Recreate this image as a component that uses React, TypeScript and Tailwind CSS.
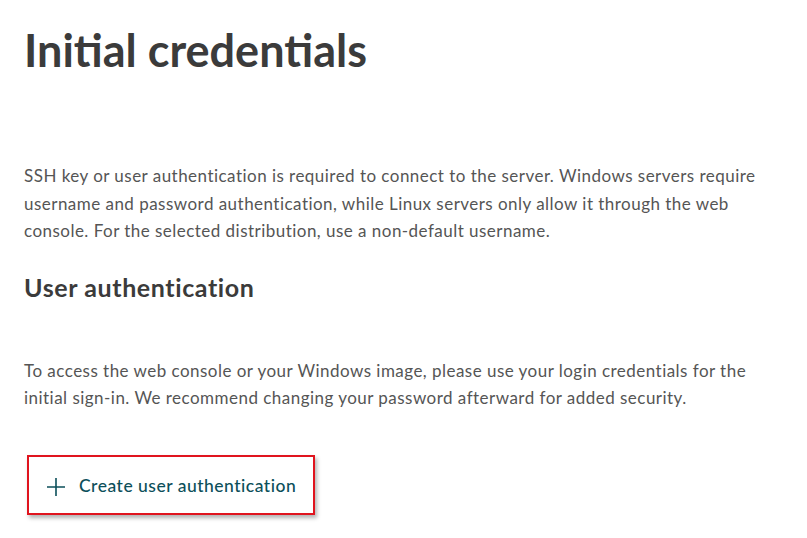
import React from "react";

export default function App() {
  return (
    <div className="w-[807px] h-[538px] bg-white overflow-hidden" style={{ fontFamily: "Lato, 'Open Sans', sans-serif" }}>
      <div className="pl-[24px] pr-[20px] pt-[22px]">
        <h1 className="text-[45px] leading-[56px] font-bold text-[#3b3b3b]">Initial credentials</h1>
        <p className="mt-[84px] w-[770px] text-[17px] leading-[27.5px] tracking-[0.47px] text-[#555555]">
          SSH key or user authentication is required to connect to the server. Windows servers require username and password authentication, while Linux servers only allow it through the web console. For the selected distribution, use a non-default username.
        </p>
        <h2 className="mt-[26px] text-[25px] leading-[32px] font-bold tracking-[0.6px] text-[#3b3b3b]">User authentication</h2>
        <p className="mt-[54px] w-[770px] text-[17px] leading-[27.5px] tracking-[0.47px] text-[#555555]">
          To access the web console or your Windows image, please use your login credentials for the initial sign-in. We recommend changing your password afterward for added security.
        </p>
        <div className="mt-[43px] ml-[3px] w-[288px] h-[60px] border-2 border-[#e0141e] shadow-[2px_3px_4px_rgba(0,0,0,0.3)] flex items-center pl-[16px] pt-[4px] gap-[12px]">
          <svg width="22" height="22" viewBox="0 0 22 22" className="shrink-0">
            <path d="M11 2v18M2 11h18" stroke="#0c4f5a" strokeWidth="1.6" />
          </svg>
          <span className="text-[17.5px] font-medium tracking-[0.5px] text-[#0c4f5a]">Create user authentication</span>
        </div>
      </div>
    </div>
  );
}
